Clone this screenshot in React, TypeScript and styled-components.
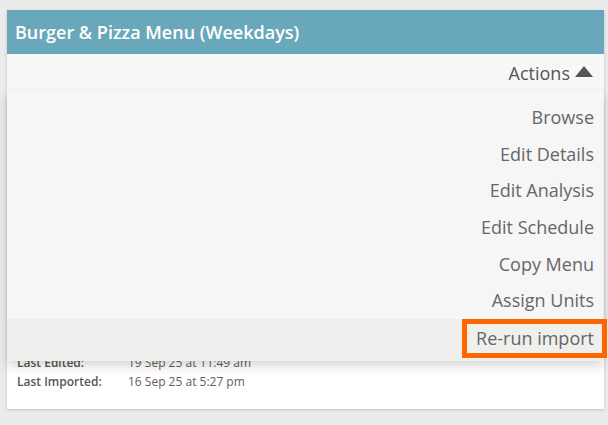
import React from 'react';
import styled, { createGlobalStyle } from 'styled-components';

const GlobalStyle = createGlobalStyle`
    html, body {
        margin: 0;
        padding: 0;
        background: #ebebeb;
        font-family: 'Open Sans', 'DejaVu Sans', sans-serif;
    }
    * {
        box-sizing: border-box;
    }
`;

const Page = styled.div`
    width: 608px;
    height: 425px;
    padding: 10px 4px 0 7px;
    overflow: hidden;
`;

const Card = styled.div`
    position: relative;
    width: 597px;
    background: #fff;
    box-shadow: 0 1px 3px rgba(0, 0, 0, 0.18);
`;

const Header = styled.div`
    height: 44px;
    display: flex;
    align-items: center;
    padding: 0 0 1px 8px;
    background: #69a8ba;
    color: #fff;
    font-size: 18px;
    font-weight: 600;
`;

const ActionsBar = styled.div`
    position: relative;
    height: 38px;
    display: flex;
    align-items: center;
    justify-content: flex-end;
    gap: 5px;
    padding: 0 11px 0 0;
    background: #f7f7f7;
    border-bottom: 1px solid #e4e4e4;
    color: #555;
    font-size: 18px;
`;

const Caret = styled.span`
    width: 0;
    height: 0;
    border-left: 9px solid transparent;
    border-right: 9px solid transparent;
    border-bottom: 11px solid #555;
    margin-top: -2px;
`;

const Menu = styled.ul`
    position: absolute;
    top: 100%;
    left: 0;
    right: 1px;
    margin: 0;
    padding: 8px 0 0;
    list-style: none;
    background: #f6f6f6;
    box-shadow: 0 5px 10px rgba(0, 0, 0, 0.16);
    z-index: 2;
`;

const MenuItem = styled.li<{ active?: boolean }>`
    height: ${(p) => (p.active ? '42px' : '36.6px')};
    display: flex;
    align-items: ${(p) => (p.active ? 'flex-start' : 'center')};
    justify-content: flex-end;
    padding-right: 9px;
    background: ${(p) => (p.active ? '#efefed' : 'transparent')};
    color: #666;
    font-size: 18px;
    white-space: nowrap;
`;

const Highlight = styled.span`
    height: 39px;
    display: inline-flex;
    align-items: center;
    margin-right: -13px;
    padding: 0 8px 0 9px;
    border: 5px solid #ff6600;
`;

const Body = styled.div`
    padding: 261px 10px 18px;
`;

const DetailRow = styled.div`
    display: flex;
    font-size: 12px;
    line-height: 19px;
`;

const DetailLabel = styled.span`
    width: 111px;
    color: #5b5551;
    font-weight: 600;
`;

const DetailValue = styled.span`
    color: #645e5a;
`;

const items = ['Browse', 'Edit Details', 'Edit Analysis', 'Edit Schedule', 'Copy Menu', 'Assign Units'];

const App: React.FC = () => {
    return (
        <Page>
            <GlobalStyle />
            <Card>
                <Header>Burger &amp; Pizza Menu (Weekdays)</Header>
                <ActionsBar>
                    Actions
                    <Caret />
                    <Menu>
                        {items.map((label) => (
                            <MenuItem key={label}>{label}</MenuItem>
                        ))}
                        <MenuItem active>
                            <Highlight>Re-run import</Highlight>
                        </MenuItem>
                    </Menu>
                </ActionsBar>
                <Body>
                    <DetailRow>
                        <DetailLabel>Last Edited:</DetailLabel>
                        <DetailValue>19 Sep 25 at 11:49 am</DetailValue>
                    </DetailRow>
                    <DetailRow>
                        <DetailLabel>Last Imported:</DetailLabel>
                        <DetailValue>16 Sep 25 at 5:27 pm</DetailValue>
                    </DetailRow>
                </Body>
            </Card>
        </Page>
    );
};

export default App;
